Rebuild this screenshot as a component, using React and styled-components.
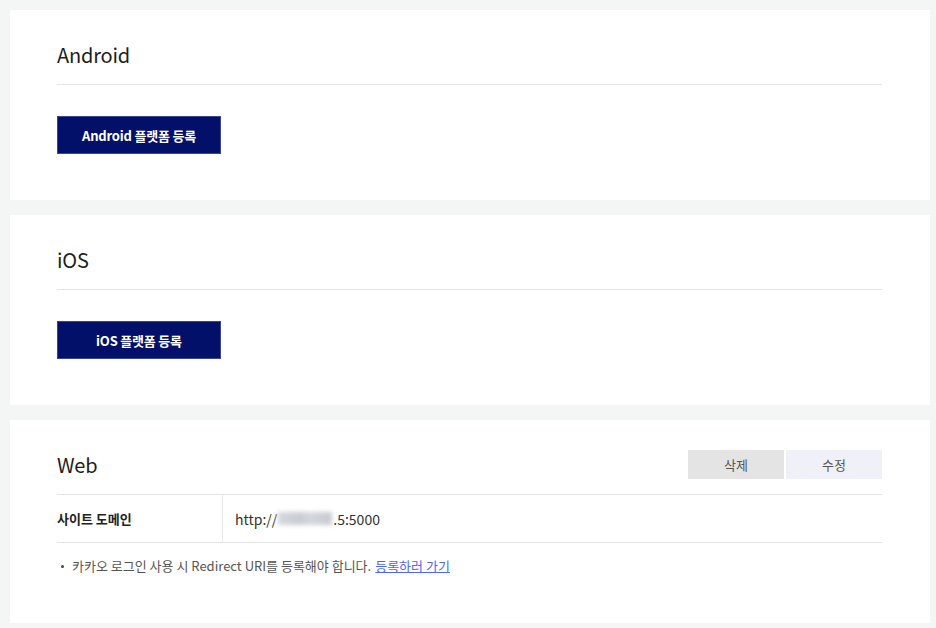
import styled, { createGlobalStyle } from 'styled-components'

const Global = createGlobalStyle`
    html, body {
        margin: 0;
        padding: 0;
        background: #f4f5f5;
    }
    body {
        font-family: "Noto Sans CJK KR", "Noto Sans", sans-serif;
        color: #222;
    }
`
const Page = styled.div`
    display: flex;
    flex-direction: column;
    gap: 15px;
    padding: 10px 6px 6px 10px;
`
const Card = styled.section`
    background: #fff;
    padding: 0 48px 0 47px;
    height: ${p => p.$h}px;
    box-sizing: border-box;
`
const Header = styled.div`
    display: flex;
    align-items: flex-end;
    justify-content: space-between;
    height: 75px;
    box-sizing: border-box;
    padding-bottom: 14px;
    border-bottom: 1px solid #e5e5e5;
`
const Title = styled.h2`
    margin: 0;
    font-size: 20px;
    font-weight: 400;
    line-height: 30px;
    color: #1e1e1e;
    letter-spacing: -0.2px;
`
const Actions = styled.div`
    display: flex;
    gap: 2px;
    margin-bottom: 1px;
`
const SmallBtn = styled.button`
    width: 96px;
    height: 29px;
    border: 0;
    padding: 0;
    font-family: inherit;
    font-size: 13px;
    color: #555;
    background: ${p => (p.$danger ? '#e4e4e4' : '#f0f1f8')};
    cursor: pointer;
`
const Body = styled.div`
    padding-top: 31px;
`
const PrimaryBtn = styled.button`
    width: 164px;
    height: 38px;
    border: 1px solid #3a4690;
    background: #021069;
    color: #fff;
    font-family: inherit;
    font-size: 13px;
    font-weight: 700;
    letter-spacing: -0.2px;
    cursor: pointer;
`
const Row = styled.div`
    display: grid;
    grid-template-columns: 166px 1fr;
    height: 48px;
    box-sizing: border-box;
    border-bottom: 1px solid #e5e5e5;
`
const Label = styled.div`
    display: flex;
    align-items: center;
    font-size: 13px;
    font-weight: 700;
    color: #222;
    border-right: 1px solid #e9e9e9;
`
const Value = styled.div`
    display: flex;
    align-items: center;
    padding-left: 12px;
    font-size: 14px;
    color: #333;
`
const Masked = styled.span`
    display: inline-block;
    width: 54px;
    height: 13px;
    margin: 0 1px;
    background: linear-gradient(90deg, #d6d8de, #c9ccd4 40%, #d3d6dc 60%, #c7cad2);
    filter: blur(2px);
`
const Notes = styled.ul`
    margin: 0;
    padding: 12px 0 0 0;
    list-style: none;
`
const Note = styled.li`
    display: flex;
    align-items: center;
    gap: 8px;
    padding-left: 4px;
    font-size: 13px;
    color: #555;
    line-height: 22px;
    &::before {
        content: '';
        width: 3px;
        height: 3px;
        border-radius: 50%;
        background: #444;
    }
`
const Link = styled.a`
    color: #4f66f0;
    text-decoration: underline;
    margin-left: 4px;
`

const PlatformCard = ({ name }) => (
    <Card $h={190}>
        <Header>
            <Title>{name}</Title>
        </Header>
        <Body>
            <PrimaryBtn>{name} 플랫폼 등록</PrimaryBtn>
        </Body>
    </Card>
)

const App = () => {
    return (
        <>
            <Global />
            <Page>
                <PlatformCard name="Android" />
                <PlatformCard name="iOS" />
                <Card $h={203}>
                    <Header>
                        <Title>Web</Title>
                        <Actions>
                            <SmallBtn $danger>삭제</SmallBtn>
                            <SmallBtn>수정</SmallBtn>
                        </Actions>
                    </Header>
                    <Row>
                        <Label>사이트 도메인</Label>
                        <Value>http://<Masked />.5:5000</Value>
                    </Row>
                    <Notes>
                        <Note>
                            <span>
                                카카오 로그인 사용 시 Redirect URI를 등록해야 합니다.
                                <Link href="#">등록하러 가기</Link>
                            </span>
                        </Note>
                    </Notes>
                </Card>
            </Page>
        </>
    )
}
export default App
